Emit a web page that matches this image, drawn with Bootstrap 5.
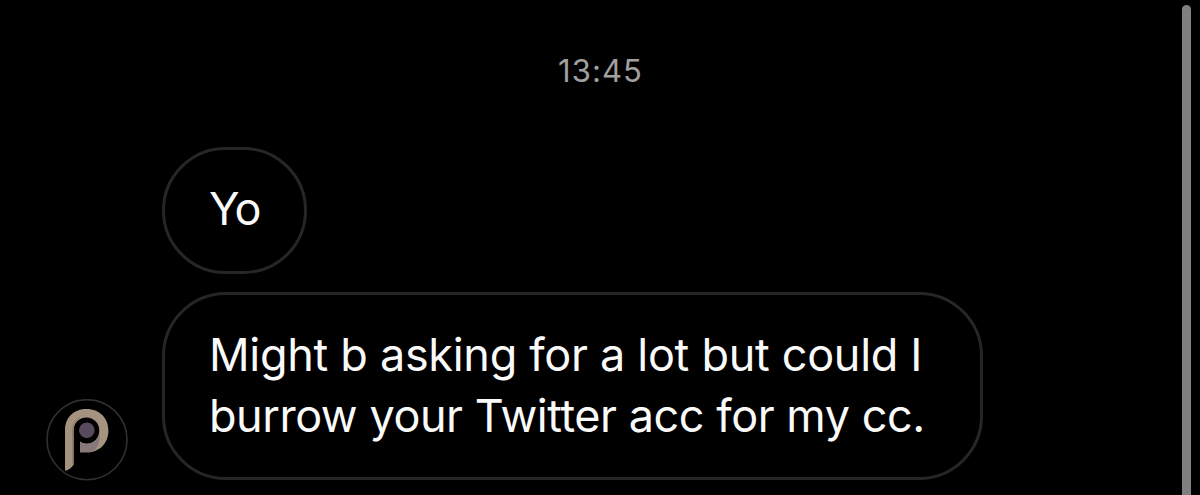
<!DOCTYPE html>
<html lang="en">
<head>
    <meta charset="UTF-8">
    <meta name="viewport" content="width=device-width, initial-scale=1">
    <title>Messages</title>
    <link href="https://cdn.jsdelivr.net/npm/bootstrap@5.3.0/dist/css/bootstrap.min.css" rel="stylesheet">
    <style>
        body {
            background-color: #000;
            font-family: Inter, "Liberation Sans", sans-serif;
        }
        .chat-screen {
            height: 495px;
            padding: 0 9px 15px 46px;
        }
        .chat-time {
            width: 1109px;
            padding-top: 47px;
            height: 147px;
            font-size: 31px;
            line-height: 48px;
            letter-spacing: 1.1px;
            color: #a0a0a0;
        }
        .chat-avatar {
            width: 82px;
            height: 82px;
            margin-right: 34px;
            margin-bottom: -1px;
        }
        .bubble-list {
            gap: 18px;
        }
        .bubble {
            padding: 28px 44px 32px;
            border: 3px solid #262626;
            border-radius: 64px;
            font-size: 45px;
            line-height: 61px;
            color: #fafafa;
            white-space: nowrap;
        }
        .bubble-short {
            width: 145px;
            letter-spacing: -1.6px;
        }
        .bubble-long {
            width: 821px;
            padding-top: 29px;
            padding-bottom: 31px;
            letter-spacing: -0.46px;
        }
        .line-first {
            letter-spacing: -0.3px;
        }
        .scroll-track {
            width: 9px;
            padding-top: 5px;
        }
        .scroll-thumb {
            background-color: #808080;
            border-radius: 5px 5px 0 0;
        }
    </style>
</head>
<body class="overflow-hidden">
    <div class="d-flex justify-content-between chat-screen pb-0">
        <main>
            <div class="chat-time text-center">13:45</div>
            <div class="d-flex align-items-end">
                <svg class="chat-avatar flex-shrink-0" viewBox="0 0 82 82" role="img" aria-label="Profile picture">
                    <circle cx="41" cy="40.7" r="40" fill="#000" stroke="#303030" stroke-width="1.6"/>
                    <path d="M19 71.8V31.5C19 18 28 10 40.5 10C53.5 10 62.4 19 62.4 31.5C62.4 44.5 53.5 53.3 41 53.3H34V42.5C36 44 38 44.7 40.5 44.7C48 44.7 53.3 39 53.3 31.5C53.3 24 47.5 18.5 40.5 18.5C33 18.5 27.8 24 27.8 31.5V65.5C25.5 68.5 23 71.3 19 71.8Z" fill="#a59380"/>
                    <path d="M34 42.5C36 44 38 44.7 40.5 44.7C47 44.7 52 40.5 53.2 34.5C54.5 42 52.5 48 47 52.4C45 53.1 43 53.3 41 53.3H34Z" fill="#87797a"/>
                    <path d="M26.8 65.5V30C27.2 24.5 30 20.5 34 18.8" fill="none" stroke="#827363" stroke-width="1"/>
                    <circle cx="40.8" cy="31.3" r="7.8" fill="#574a5d"/>
                </svg>
                <div class="d-flex flex-column bubble-list">
                    <div class="bubble bubble-short">Yo</div>
                    <div class="bubble bubble-long"><span class="line-first">Might b asking for a lot but could I</span><br>burrow your Twitter acc for my cc.</div>
                </div>
            </div>
        </main>
        <div class="d-flex flex-column scroll-track">
            <div class="scroll-thumb flex-grow-1"></div>
        </div>
    </div>

    <script src="https://cdn.jsdelivr.net/npm/bootstrap@5.3.0/dist/js/bootstrap.bundle.min.js"></script>
</body>
</html>
